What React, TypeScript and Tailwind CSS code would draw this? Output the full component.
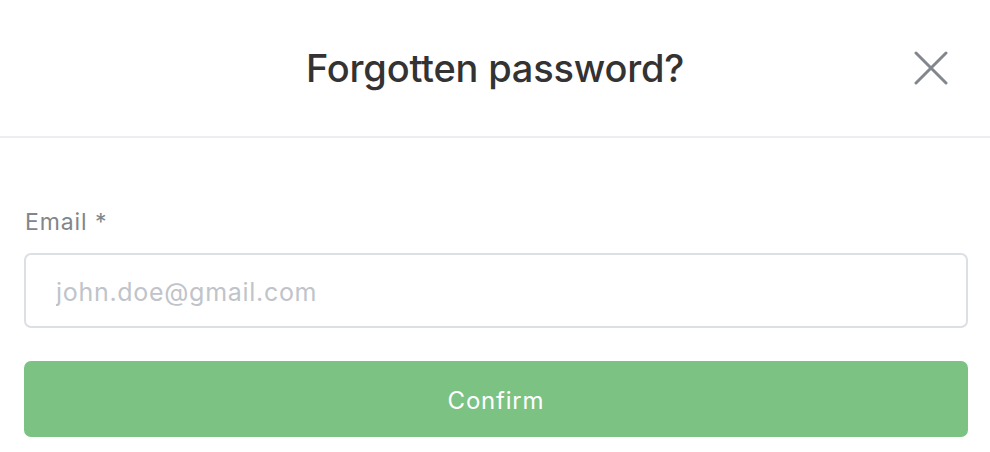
import React from "react";

export default function App() {
  return (
    <div className="w-[990px] h-[452px] bg-white overflow-hidden" style={{ fontFamily: "Inter, 'Liberation Sans', sans-serif" }}>
      <div className="relative h-[138px] flex items-center justify-center border-b-2 border-[#eceef1]">
        <h1 className="text-[38px] font-medium text-[#333333] tracking-[-0.2px] leading-none">Forgotten password?</h1>
        <button className="absolute right-[42px] top-[51px] w-[34px] h-[34px] flex items-center justify-center">
          <svg width="34" height="34" viewBox="0 0 34 34" fill="none">
            <path d="M2 2L32 32M32 2L2 32" stroke="#82878d" strokeWidth="3" strokeLinecap="round" />
          </svg>
        </button>
      </div>
      <div className="pl-6 pr-[22px] pt-[69px]">
        <label className="block text-[23px] leading-[30px] text-[#80868b] tracking-[0.9px] mb-[16px] pl-[1px]">Email *</label>
        <input
          type="email"
          placeholder="john.doe@gmail.com"
          className="w-full h-[75px] border-2 border-[#dcdfe4] rounded-[7px] pl-[30px] pt-[2px] text-[25px] tracking-[0.7px] text-[#333] placeholder:text-[#c0c4ca] outline-none"
        />
        <button className="mt-[33px] w-full h-[76px] rounded-[7px] bg-[#7cc283] text-white text-[24px] tracking-[0.8px] pt-[3px]">
          Confirm
        </button>
      </div>
    </div>
  );
}
